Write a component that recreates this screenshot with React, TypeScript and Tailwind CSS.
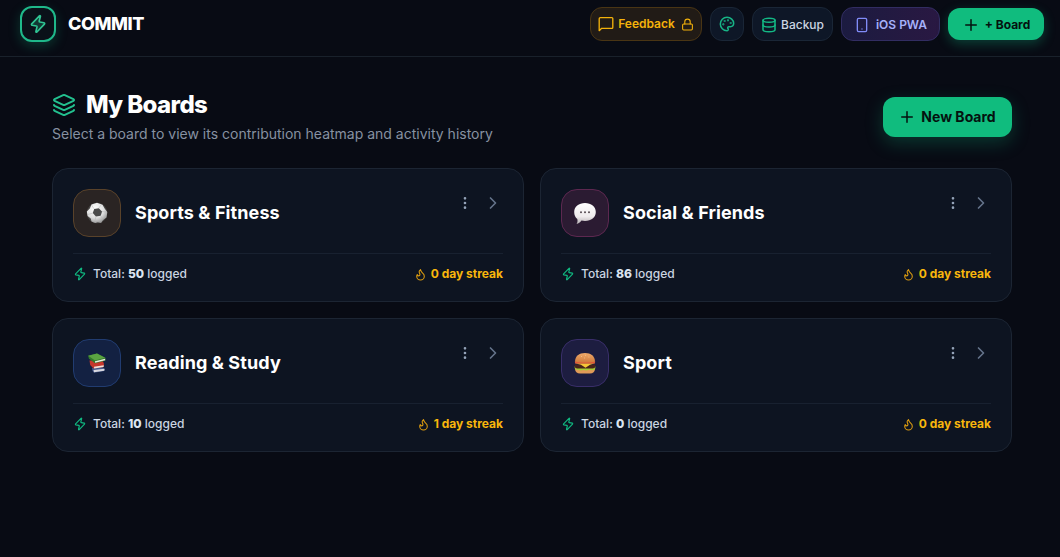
import type { ReactNode } from "react";
import {
  ChevronRight,
  Database,
  Flame,
  Layers,
  Lock,
  MoreVertical,
  Palette,
  Plus,
  Smartphone,
} from "lucide-react";

type Board = {
  id: string;
  name: string;
  total: number;
  streak: number;
  tile: string;
  art: ReactNode;
};

// Slanted lightning bolt used for the logo and the totals.
function Bolt({ className }: { className: string }) {
  return (
    <svg
      viewBox="0 0 24 24"
      fill="none"
      stroke="currentColor"
      strokeWidth="2"
      strokeLinecap="round"
      strokeLinejoin="round"
      className={className}
    >
      <path d="M13.700 2.300 4.500 11.900c-.6.7-.3 1.400.5 1.600l5 .9c.6.100.9.500.8 1.100l-1.300 5.500c-.2.900.6 1.200 1.200.6l9-9.500c.6-.7.3-1.400-.5-1.600l-5-.9c-.6-.1-.9-.5-.8-1.100l1.500-5.600c.2-.8-.6-1.200-1.200-.6Z" />
    </svg>
  );
}

function FeedbackIcon({ className }: { className: string }) {
  return (
    <svg
      viewBox="0 0 24 24"
      fill="none"
      stroke="currentColor"
      strokeWidth="2"
      strokeLinecap="round"
      strokeLinejoin="round"
      className={className}
    >
      <path d="M3.500 2.500h17.300c.8 0 1.400.6 1.400 1.400v13.200c0 .8-.6 1.400-1.400 1.400H5.500L1.800 22V4c0-.9.700-1.500 1.700-1.500Z" />
    </svg>
  );
}

function SoccerArt() {
  return (
    <svg viewBox="0 0 22 22" className="h-[22px] w-[22px]">
      <defs>
        <radialGradient id="ball" cx="40%" cy="30%" r="75%">
          <stop offset="0" stopColor="#ffffff" />
          <stop offset="0.6" stopColor="#dedede" />
          <stop offset="1" stopColor="#8f8f8f" />
        </radialGradient>
      </defs>
      <circle cx="11" cy="11" r="10.300" fill="#464443" />
      <path d="M5.500 2.500 11 .8l5.500 2 2.300 4L21.300 10l-.8 5.500-3.400 2.500-2 3-3.300-.8-2.600.8-3.700-1.600-.8-3L1.600 14 .8 9.500l3-3Z" fill="url(#ball)" />
      <path d="m8.200 7 4.600-.8 3.200 3.300-1.300 4.300-4.800.8-3.100-3.500Z" fill="#4b4b4b" />
      <path d="M8.200 7 5.500 3M12.800 6.200l2-3M16 9.500l4 .5M14.700 13.800l2.300 3.500M9.900 14.600 9 19M6.800 11.100 2 12.500" stroke="#b5b5b5" strokeWidth=".5" />
    </svg>
  );
}

function SpeechArt() {
  return (
    <svg viewBox="0 0 22 22" className="h-[22px] w-[22px]">
      <defs>
        <linearGradient id="speech" x1="0" y1="0" x2="0" y2="1">
          <stop offset="0" stopColor="#ffffff" />
          <stop offset="0.65" stopColor="#eeeaec" />
          <stop offset="1" stopColor="#b5afb2" />
        </linearGradient>
      </defs>
      <path d="M11 1c6.200 0 10.800 3.600 10.800 9s-4.600 9-10.800 9c-1.300 0-2.400-.1-3.500-.4C6.200 20.300 4.700 21.500 2.500 22c1-1.400 1.300-3 .8-5C1.300 15.400.2 13 .2 10 .2 4.600 4.800 1 11 1Z" fill="url(#speech)" />
      <circle cx="7" cy="10.300" r="1" fill="#554b52" />
      <circle cx="11" cy="10.300" r="1" fill="#554b52" />
      <circle cx="15" cy="10.300" r="1" fill="#554b52" />
    </svg>
  );
}

function BooksArt() {
  return (
    <svg viewBox="0 0 22 22" className="h-[22px] w-[22px]">
      <path d="m6 16 11-.5 1.700 1.700-.4 1.800L8 20.800l-1.600-2Z" fill="#45578b" />
      <path d="m7.500 18 11-1.300-.2 2L8 20.200Z" fill="#d8d8df" />
      <path d="m3.500 8.500 13-.5 1.500 4-.5 3-10 1.500-3.300-3.500Z" fill="#c5372d" />
      <path d="m8 14.800 9.800-1.500-.2 1.800-9.400 1.400Z" fill="#eee0db" />
      <path d="M2 3.800 11 1.500l8.500 4.300v2.900L9 11.300 3 6.800Z" fill="#347a2a" />
      <path d="m2.300 3.700 8.700-2.200 8 4.300L9 8.400Z" fill="#5ba442" />
      <path d="m9 9.300 10.100-2.500v1.500L9.100 10.800Z" fill="#e9eee4" />
    </svg>
  );
}

function BurgerArt() {
  return (
    <svg viewBox="0 0 22 22" className="h-[22px] w-[22px]">
      <defs>
        <linearGradient id="bun" x1="0" y1="0" x2="0" y2="1">
          <stop offset="0" stopColor="#efa96a" />
          <stop offset="1" stopColor="#cf7a3c" />
        </linearGradient>
      </defs>
      <path d="M1 16.500h20c0 3.400-2 5-5 5H6c-3 0-5-1.600-5-5Z" fill="#e09a58" />
      <path d="M.5 14.500h21l-.5 3-3 .8-2.500-.5-3 .8-3-.6-3 .6-2.500-.7L1 17Z" fill="#a5cc35" />
      <path d="M.8 12.500h20.400v2c0 1.300-1 2-2.500 2H3.300c-1.500 0-2.500-.7-2.500-2Z" fill="#48231a" />
      <path d="M1 11.200h20l-5 1.500-4.500 3-4.500-3Z" fill="#f6c637" />
      <path d="M.8 9.500h20.400l-.4 2H1.200Z" fill="#e2573a" />
      <path d="M1 9.800C1 4.300 5.200 1 11 1s10 3.300 10 8.800c-3 1-17 1-20 0Z" fill="url(#bun)" />
      <path d="M7 4.500h.8M11 3.300h.8M14.500 5h.8M10 6h.8" stroke="#f8d8a0" strokeWidth=".7" />
    </svg>
  );
}

const boards: Board[] = [
  {
    id: "sports",
    name: "Sports & Fitness",
    total: 50,
    streak: 0,
    tile: "border-[#59422a] bg-[#2a2423]",
    art: <SoccerArt />,
  },
  {
    id: "social",
    name: "Social & Friends",
    total: 86,
    streak: 0,
    tile: "border-[#5d2850] bg-[#2b1b32]",
    art: <SpeechArt />,
  },
  {
    id: "reading",
    name: "Reading & Study",
    total: 10,
    streak: 1,
    tile: "border-[#213c70] bg-[#132142]",
    art: <BooksArt />,
  },
  {
    id: "sport",
    name: "Sport",
    total: 0,
    streak: 0,
    tile: "border-[#392e69] bg-[#1d1d40]",
    art: <BurgerArt />,
  },
];

function Header() {
  return (
    <header className="flex h-[57px] items-start justify-between border-b border-[#19212b] pt-1.5 pr-4 pl-5">
      <div className="flex items-center gap-3">
        <div className="flex h-9 w-9 items-center justify-center rounded-xl border-2 border-[#1fb88a] bg-[#0a1119] shadow-[0_4px_12px_rgba(16,185,129,0.25)]">
          <Bolt className="h-5 w-5 fill-[#34d399]/20 text-[#2fc493]" />
        </div>
        <span className="text-lg font-extrabold tracking-[-0.45px] text-white">COMMIT</span>
      </div>

      <div className="flex h-9 items-center gap-2 text-xs font-medium">
        <button type="button" className="flex h-[34px] w-28 items-center justify-center gap-1 rounded-xl border border-[#493514] bg-[#211b16] font-semibold text-[#f4b20b]">
          <FeedbackIcon className="h-4 w-4" />
          Feedback
          <Lock className="ml-0.5 h-[13px] w-[13px]" />
        </button>
        <button type="button" className="flex h-[34px] w-[34px] items-center justify-center rounded-xl border border-[#1a2636] bg-[#0e1727] text-[#17b486]">
          <Palette className="h-4 w-4" strokeWidth={2.3} />
        </button>
        <button type="button" className="flex h-[34px] w-[81px] items-center justify-center gap-1 rounded-xl border border-[#1a2636] bg-[#0e1727] pt-px text-[#cbd5e1]">
          <Database className="h-4 w-4 text-[#13b985]" strokeWidth={2.3} />
          Backup
        </button>
        <button type="button" className="flex h-[34px] w-[99px] items-center justify-center gap-1.5 rounded-xl border border-[#322d62] bg-linear-to-r from-[#1b1b40] to-[#291842] pt-px font-semibold text-[#a5b0fa]">
          <Smartphone className="h-4 w-4 text-[#818cf8]" />
          iOS PWA
        </button>
        <button type="button" className="flex h-8 w-24 items-center justify-center gap-[5px] rounded-xl bg-[#10bc7e] pt-px font-bold text-[#04120f] shadow-[0_4px_12px_rgba(16,185,129,0.3)]">
          <Plus className="h-[18px] w-[18px]" />
          + Board
        </button>
      </div>
    </header>
  );
}

function BoardCard({ board }: { board: Board }) {
  return (
    <article className="h-[134px] rounded-2xl border border-[#1c2533] bg-[#0d1421] p-5">
      <div className="flex h-12 items-center">
        <div className={`flex h-12 w-12 shrink-0 items-center justify-center rounded-2xl border ${board.tile}`}>
          {board.art}
        </div>
        <h2 className="ml-3.5 flex-1 text-lg font-bold tracking-[0.1px] text-white">{board.name}</h2>
        <div className="flex items-center gap-2.5 self-start pt-1">
          <MoreVertical className="h-4 w-4 text-[#94a3b8]" />
          <ChevronRight className="h-5 w-5 text-[#64748b]" />
        </div>
      </div>

      <div className="mt-4 flex items-center justify-between border-t border-[#182130] pt-3 text-xs">
        <span className="flex items-center gap-1.5 font-medium text-[#cbd5e1]">
          <Bolt className="h-3.5 w-3.5 text-[#10b981]" />
          <span>
            Total: <strong className="font-extrabold text-[#dbe4f0]">{board.total}</strong> logged
          </span>
        </span>
        <span className="flex items-center gap-1 font-bold text-[#f8b60c]">
          <Flame className="h-[13px] w-[13px] text-[#d99a10]" />
          {board.streak} day streak
        </span>
      </div>
    </article>
  );
}

export default function App() {
  return (
    <div className="min-h-screen bg-[#080b14] font-['Inter',sans-serif]">
      <Header />
      <main className="px-12 pt-8 pl-[52px]">
        <div className="mb-6 flex items-end justify-between">
          <div>
            <h1 className="flex items-center gap-2.5 text-2xl font-extrabold tracking-tight text-white">
              <Layers className="h-6 w-6 text-[#23c18f]" />
              My Boards
            </h1>
            <p className="mt-[3px] text-sm text-[#8791a1]">
              Select a board to view its contribution heatmap and activity history
            </p>
          </div>
          <button type="button" className="mb-[7px] flex h-10 w-[129px] items-center justify-center gap-[5px] rounded-xl bg-[#10bc7e] pr-px text-sm font-bold text-[#04120f] shadow-[0_6px_18px_rgba(16,185,129,0.25)]">
            <Plus className="h-[18px] w-[18px]" />
            New Board
          </button>
        </div>

        <div className="grid grid-cols-2 gap-4">
          {boards.map((board) => (
            <BoardCard key={board.id} board={board} />
          ))}
        </div>
      </main>
    </div>
  );
}
